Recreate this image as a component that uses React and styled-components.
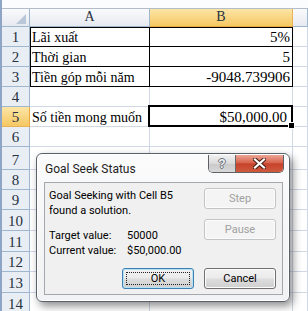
import React from 'react'
import styled, { createGlobalStyle, css } from 'styled-components'

const GlobalStyle = createGlobalStyle`
  html, body {
    margin: 0;
    padding: 0;
    background: #fff;
    overflow: hidden;
  }
`

const rowHeights = [20, 20, 20, 20, 20, 20, 23, 20, 20, 21, 21, 20, 21, 21]

const rows = [
  { n: 1, a: 'Lãi xuất', b: '5%', boxed: true, top: true },
  { n: 2, a: 'Thời gian', b: '5', boxed: true },
  { n: 3, a: 'Tiền góp mỗi năm', b: '-9048.739906', boxed: true },
  { n: 4 },
  { n: 5, a: 'Số tiền mong muốn', b: '$50,000.00', selected: true },
  ...[6, 7, 8, 9, 10, 11, 12, 13, 14].map(n => ({ n }))
]

const Page = styled.div`
  position: relative;
  height: 311px;
  overflow: hidden;
  border-left: 2px solid #8ea5c5;
`

const TopStrip = styled.div`
  height: 8px;
  background: #fbfcfd;
  border-bottom: 1px solid #b3bdc9;
`

const Sheet = styled.div`
  display: grid;
  grid-template-columns: 28px 120px 143px 1fr;
  grid-template-rows: 18px ${rowHeights.map(h => `${h}px`).join(' ')};
  font-family: 'Liberation Serif', 'Times New Roman', serif;
`

const headerBg = css`
  background: linear-gradient(#f9fafc, #e6eaf0);
`
const selectedBg = css`
  background: linear-gradient(#fce5a6, #f6c862);
`

const Corner = styled.div`
  ${headerBg};
  border-right: 1px solid #9eb6ce;
  border-bottom: 1px solid #9eb6ce;
  display: flex;
  align-items: flex-end;
  justify-content: flex-end;
  padding: 0 3px 2px 0;
`

const ColHeader = styled.div`
  ${p => (p.$selected ? selectedBg : headerBg)};
  border-right: 1px solid ${p => (p.$selected ? '#e9b458' : '#9eb6ce')};
  border-bottom: 1px solid ${p => (p.$selected ? '#e9a83c' : '#9eb6ce')};
  display: flex;
  align-items: center;
  justify-content: center;
  padding-bottom: 2px;
  font-size: 14px;
  color: #27313d;
`

const RowHeader = styled.div`
  ${p =>
    p.$selected
      ? selectedBg
      : css`
          background: #e9eef5;
        `};
  border-right: 1px solid ${p => (p.$selected ? '#e9a83c' : '#9eb6ce')};
  border-bottom: 1px solid ${p => (p.$selected ? '#e9b458' : '#9eb6ce')};
  display: flex;
  align-items: flex-end;
  justify-content: center;
  font-size: 15px;
  line-height: 17px;
  color: #27313d;
`

const edgeShadow = p => {
  const s = []
  if (p.$edgeTop) s.push('inset 0 1px 0 #000')
  if (p.$edgeLeft) s.push('inset 1px 0 0 #000')
  return s.length ? s.join(', ') : 'none'
}

const Cell = styled.div`
  position: relative;
  display: flex;
  align-items: flex-end;
  justify-content: ${p => (p.$right ? 'flex-end' : 'flex-start')};
  padding: 0 ${p => (p.$trail ? '5px' : '2px')} 0 2px;
  font-size: ${p => (p.$right ? '15px' : '14px')};
  line-height: 17px;
  color: #000;
  white-space: nowrap;
  border-right: 1px solid ${p => (p.$boxed ? '#000' : '#d0d7e5')};
  border-bottom: 1px solid ${p => (p.$boxed ? '#000' : '#d0d7e5')};
  box-shadow: ${edgeShadow};

  ${p =>
    p.$selected &&
    css`
      &::after {
        content: '';
        position: absolute;
        left: -2px;
        top: -2px;
        right: -1px;
        bottom: -1px;
        border: 2px solid #000;
      }
      &::before {
        content: '';
        position: absolute;
        right: -3px;
        bottom: -3px;
        width: 5px;
        height: 5px;
        background: #000;
        border: 1px solid #fff;
        z-index: 1;
      }
    `}
`

const Dialog = styled.div`
  position: absolute;
  left: 34px;
  top: 153px;
  width: 254px;
  height: 149px;
  box-sizing: border-box;
  display: flex;
  flex-direction: column;
  border: 1px solid #59616b;
  border-radius: 6px;
  background: linear-gradient(#fbfbfc, #f1f2f4);
  box-shadow: inset 0 0 0 1px #ffffff, 3px 4px 9px rgba(0, 0, 0, 0.45);
  font-family: Roboto, 'Noto Sans', sans-serif;
  color: #000;
`

const Caption = styled.div`
  height: 28px;
  display: flex;
  align-items: flex-start;
  padding-left: 8px;
`

const Title = styled.div`
  flex: 1;
  margin-top: 8px;
  font-size: 12px;
  line-height: 14px;
  color: #1e1e1e;
`

const CaptionButtons = styled.div`
  display: flex;
  margin: 1px 5px 0 0;
  height: 17px;
  border: 1px solid #5e6166;
  border-top: none;
  border-radius: 0 0 5px 5px;
  overflow: hidden;
`

const HelpButton = styled.div`
  width: 26px;
  display: flex;
  align-items: center;
  justify-content: center;
  background: linear-gradient(#f1f1f1, #dadada 50%, #c9c9c9 51%, #d8d8d8);
  border-right: 1px solid #6a6a6a;
  font: bold 12px 'Liberation Sans', Arial, sans-serif;
  color: #eef0f2;
  text-shadow: -1px 0 #6c7178, 1px 0 #6c7178, 0 -1px #6c7178, 0 1px #6c7178;
`

const CloseButton = styled.div`
  width: 47px;
  display: flex;
  align-items: center;
  justify-content: center;
  background: linear-gradient(#eba596, #d8644d 45%, #c5432b 52%, #d05a3e);
`

const Client = styled.div`
  flex: 1;
  margin: 0 6px 6px 7px;
  border: 1px solid #a4a7ab;
  background: #f0f0f0;
  padding: 5px 6px 5px 4px;
  display: flex;
  flex-direction: column;
  font-size: 11px;
  line-height: 15px;
`

const Body = styled.div`
  display: flex;
  justify-content: space-between;
`

const Message = styled.div`
  white-space: nowrap;
`

const Values = styled.div`
  display: grid;
  grid-template-columns: 78px auto;
  margin-top: 10px;
  white-space: nowrap;
`

const SideButtons = styled.div`
  display: flex;
  flex-direction: column;
  gap: 10px;
`

const Footer = styled.div`
  margin-top: auto;
  display: flex;
  justify-content: flex-end;
  gap: 10px;
`

const Button = styled.div`
  position: relative;
  width: 72px;
  height: 21px;
  box-sizing: border-box;
  display: flex;
  align-items: center;
  justify-content: center;
  border-radius: 3px;
  font-size: 11px;
  border: 1px solid ${p => (p.$disabled ? '#c2c5c8' : p.$default ? '#3c7fb1' : '#707070')};
  color: ${p => (p.$disabled ? '#a0a0a0' : '#000')};
  background: ${p =>
    p.$disabled
      ? '#f4f4f4'
      : 'linear-gradient(#f2f2f2, #ebebeb 48%, #dddddd 52%, #cfcfcf)'};
  box-shadow: ${p => (p.$default ? 'inset 0 0 0 1px #b7e1f7' : 'inset 0 0 0 1px #fcfcfc')};

  ${p =>
    p.$focus &&
    css`
      &::after {
        content: '';
        position: absolute;
        inset: 3px;
        border: 1px dotted #222;
      }
    `}
`

const CornerMark = () => (
  <svg width="10" height="10" viewBox="0 0 10 10">
    <path d="M10 0 L10 10 L0 10 Z" fill="#b9c7d8" />
  </svg>
)

const CloseGlyph = () => (
  <svg width="13" height="11" viewBox="0 0 13 11">
    <path d="M2 1.5 L11 9.5 M11 1.5 L2 9.5" stroke="#4a1e15" strokeWidth="4.2" strokeLinecap="square" />
    <path d="M2 1.5 L11 9.5 M11 1.5 L2 9.5" stroke="#ffffff" strokeWidth="2.2" strokeLinecap="square" />
  </svg>
)

const App = () => (
  <>
    <GlobalStyle />
    <Page>
      <TopStrip />
      <Sheet>
        <Corner>
          <CornerMark />
        </Corner>
        <ColHeader>A</ColHeader>
        <ColHeader $selected>B</ColHeader>
        <ColHeader />
        {rows.map(r => (
          <React.Fragment key={r.n}>
            <RowHeader $selected={r.selected}>{r.n}</RowHeader>
            <Cell $boxed={r.boxed} $edgeTop={r.top} $edgeLeft={r.boxed}>
              {r.a}
            </Cell>
            <Cell $boxed={r.boxed} $edgeTop={r.top} $right $selected={r.selected} $trail={r.selected}>
              {r.b}
            </Cell>
            <Cell />
          </React.Fragment>
        ))}
      </Sheet>

      <Dialog>
        <Caption>
          <Title>Goal Seek Status</Title>
          <CaptionButtons>
            <HelpButton>?</HelpButton>
            <CloseButton>
              <CloseGlyph />
            </CloseButton>
          </CaptionButtons>
        </Caption>
        <Client>
          <Body>
            <div>
              <Message>
                Goal Seeking with Cell B5
                <br />
                found a solution.
              </Message>
              <Values>
                <span>Target value:</span>
                <span>50000</span>
                <span>Current value:</span>
                <span>$50,000.00</span>
              </Values>
            </div>
            <SideButtons>
              <Button $disabled>Step</Button>
              <Button $disabled>Pause</Button>
            </SideButtons>
          </Body>
          <Footer>
            <Button $default $focus>OK</Button>
            <Button>Cancel</Button>
          </Footer>
        </Client>
      </Dialog>
    </Page>
  </>
)

export default App
